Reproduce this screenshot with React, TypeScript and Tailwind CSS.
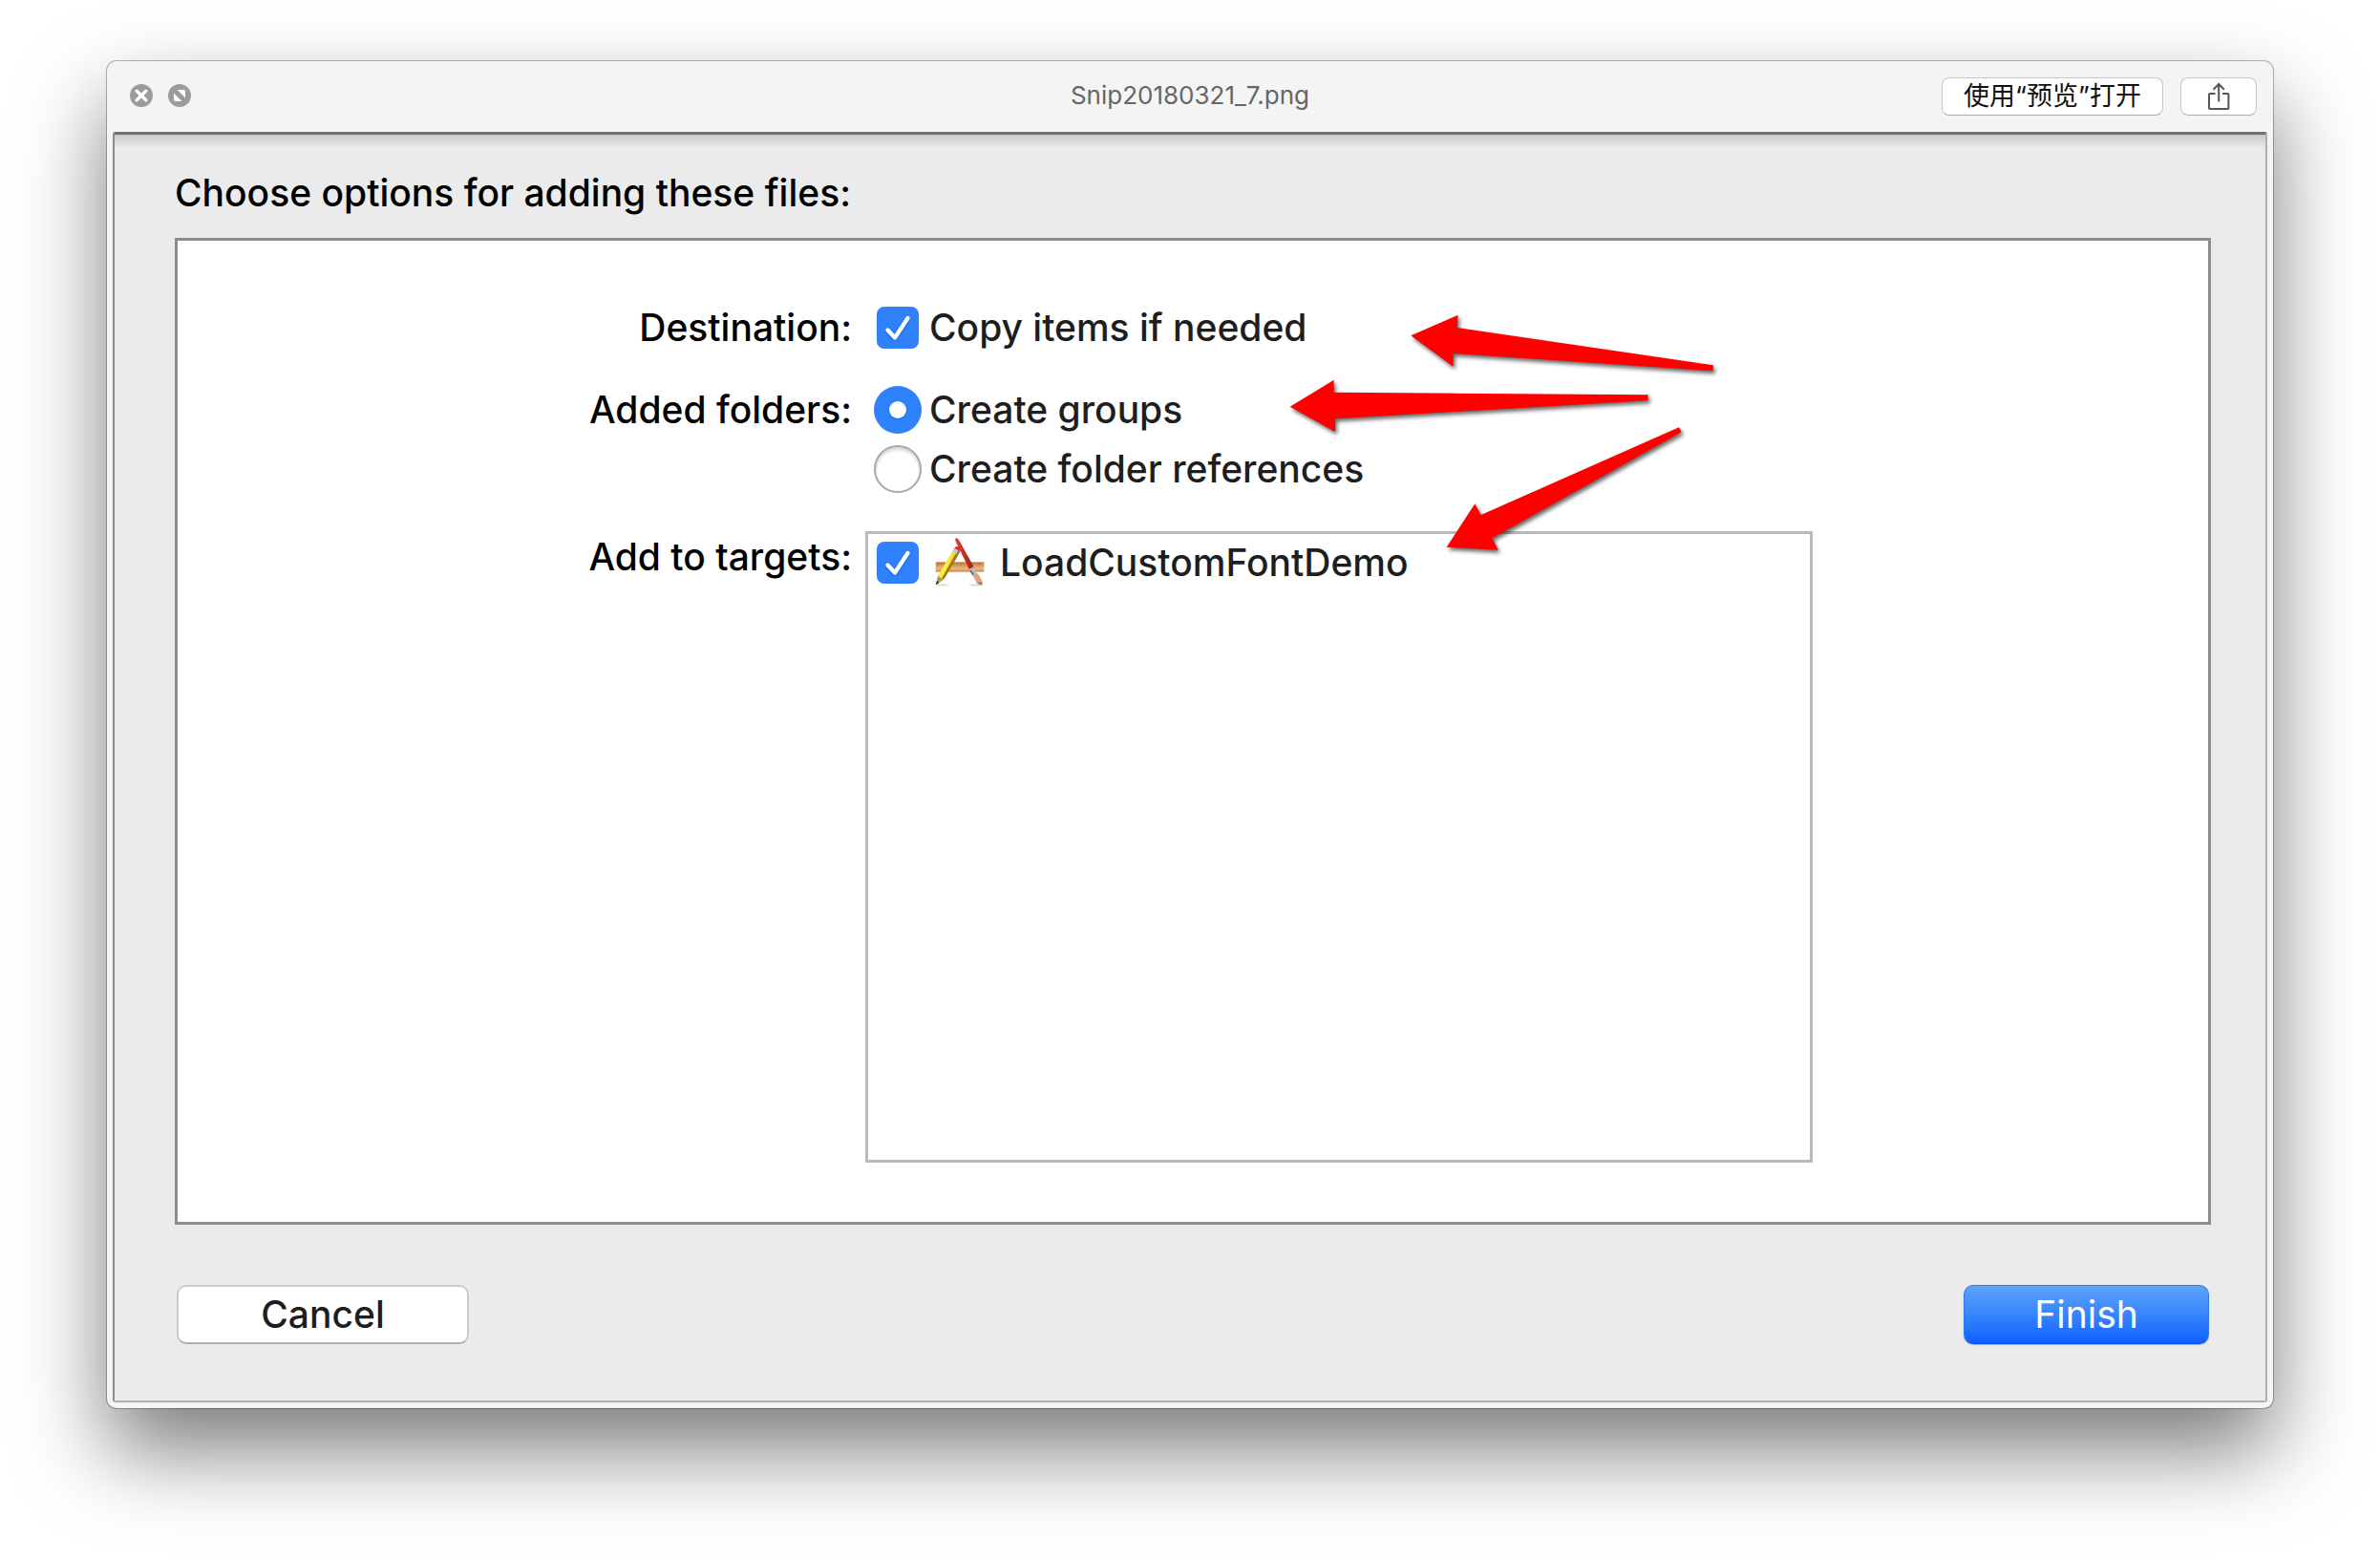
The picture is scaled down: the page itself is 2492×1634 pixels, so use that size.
import { useState } from "react";
import type { ReactNode } from "react";

function CloseGlyph() {
  return (
    <svg viewBox="0 0 24 24" className="size-6" aria-hidden="true">
      <circle cx="12" cy="12" r="12" fill="#9b9b9b" />
      <path d="M7.2 7.2l9.6 9.6M16.8 7.2l-9.6 9.6" stroke="#fff" strokeWidth="3.4" strokeLinecap="round" />
    </svg>
  );
}

function ZoomGlyph() {
  return (
    <svg viewBox="0 0 24 24" className="size-6" aria-hidden="true">
      <circle cx="12" cy="12" r="12" fill="#9b9b9b" />
      <path d="M9.6 6H16.6Q18 6 18 7.4V14.4Z" fill="#fff" />
      <path d="M6 9.6V16.6Q6 18 7.4 18H14.4Z" fill="#fff" />
    </svg>
  );
}

function ShareGlyph() {
  return (
    <svg viewBox="0 0 24 30" className="h-[30px] w-6" fill="none" stroke="#555" strokeWidth="2" aria-hidden="true">
      <path d="M8.5 12H3Q2 12 2 13V27Q2 28 3 28H21.4Q22.4 28 22.4 27V13Q22.4 12 21.4 12H16" />
      <path d="M12.2 20.5V2M6.6 7.8L12.2 2L17.8 7.8" />
    </svg>
  );
}

function AppGlyph() {
  return (
    <svg viewBox="0 0 156 156" className="size-[52px] shrink-0" aria-hidden="true">
      <defs>
        <linearGradient id="wood" x1="0" y1="0" x2="0" y2="1">
          <stop offset="0" stopColor="#cf8a55" />
          <stop offset="0.35" stopColor="#d79a63" />
          <stop offset="0.65" stopColor="#efb780" />
          <stop offset="1" stopColor="#c98a55" />
        </linearGradient>
        <linearGradient id="pencil" x1="0" y1="0" x2="1" y2="0.6">
          <stop offset="0" stopColor="#e8c400" />
          <stop offset="0.5" stopColor="#fff04a" />
          <stop offset="1" stopColor="#b88a00" />
        </linearGradient>
        <linearGradient id="brush" x1="0" y1="0.4" x2="1" y2="0">
          <stop offset="0" stopColor="#e2533b" />
          <stop offset="0.5" stopColor="#b02a1c" />
          <stop offset="1" stopColor="#701409" />
        </linearGradient>
      </defs>
      <ellipse cx="24" cy="148" rx="20" ry="4" fill="#000" opacity="0.12" />
      <ellipse cx="130" cy="148" rx="24" ry="4" fill="#000" opacity="0.14" />
      <rect x="2" y="77" width="152" height="30" fill="url(#wood)" />
      <path d="M2 77.500H154" stroke="#b5713f" strokeWidth="2" />
      <path d="M10 78v8M20 78v5M30 78v8M40 78v5M60 78v8M70 78v5M80 78v8M90 78v5M120 78v8M130 78v5M140 78v8" stroke="#96592e" strokeWidth="2" />
      <path d="M65 1Q72 1 76 8L122 92L108 100L66 14Q62 5 65 1Z" fill="url(#brush)" />
      <path d="M107 99L121 91L131 110L118 118Z" fill="#b9bcc0" />
      <path d="M109 103L113 101L123 114L118 118Z" fill="#606468" />
      <path d="M118 118L131 110Q145 122 149 140Q150 147 143 148Q136 147 129 137Z" fill="#dba58a" />
      <path d="M129 137Q136 147 143 148Q150 147 149 140Q141 142 129 137Z" fill="#a8705a" />
      <path d="M54 42L73 53L28 130L9 119Z" fill="url(#pencil)" />
      <path d="M66 49L73 53L28 130L22 126Z" fill="#9b7808" />
      <path d="M9 119L28 130L5 147Q3 147 3 144Z" fill="#b29a5c" />
      <path d="M6 134L13 140L5 147Q3 147 3 144Z" fill="#3c3a34" />
      <path d="M60 32L79 43L73 53L54 42Z" fill="#c6c9cc" />
      <path d="M73 39L79 43L73 53L67 49Z" fill="#777b80" />
      <path d="M60 32Q66 24 74 28Q82 33 79 43Z" fill="#ee2436" />
    </svg>
  );
}

function Check({ id, defaultChecked }: { id: string; defaultChecked?: boolean }) {
  const [on, setOn] = useState(!!defaultChecked);
  return (
    <span className="grid size-11 shrink-0">
      <input
        id={id}
        type="checkbox"
        checked={on}
        onChange={(e) => setOn(e.target.checked)}
        className="size-11 appearance-none rounded-lg border border-[#b4b4b4] bg-white [grid-area:1/1] checked:border-0 checked:bg-[#2f82fb]"
      />
      {on && (
        <svg viewBox="0 0 44 44" className="pointer-events-none size-11 drop-shadow-[0_1px_1px_#0b4fae99] [grid-area:1/1]" aria-hidden="true">
          <path d="M11.500 24.500L19 32.500L32.500 12" fill="none" stroke="#fff" strokeWidth="4.2" strokeLinecap="round" strokeLinejoin="round" />
        </svg>
      )}
    </span>
  );
}

function Radio({ id, checked, onSelect }: { id: string; checked: boolean; onSelect: () => void }) {
  return (
    <span className="grid size-[50px] shrink-0 place-items-center">
      <input
        id={id}
        type="radio"
        name="folders"
        checked={checked}
        onChange={onSelect}
        className="size-[50px] appearance-none rounded-full border-2 border-[#a9a9a9] bg-white shadow-[inset_0_3px_3px_#00000026] [grid-area:1/1] checked:border-0 checked:bg-[#2f82fb] checked:shadow-none"
      />
      {checked && (
        <span className="pointer-events-none size-[18px] rounded-full bg-white shadow-[0_1px_2px_#0b4fae99] [grid-area:1/1]" />
      )}
    </span>
  );
}

function Option({ id, text, children }: { id: string; text: string; children: ReactNode }) {
  return (
    <div className="flex items-center gap-2 pl-[9px]">
      <span className="flex w-[50px] justify-center">{children}</span>
      <label htmlFor={id}>{text}</label>
    </div>
  );
}

function Arrows() {
  return (
    <svg
      viewBox="0 0 1500 870"
      className="pointer-events-none absolute top-[58px] left-[53.300%] h-[290px] w-[500px] drop-shadow-[2px_3px_2px_#00000099]"
      fill="#fe0000"
      aria-hidden="true"
    >
      <path d="M475 124L623 59L620 99L1425 217L1424 235L608 180V221Z" />
      <path d="M95 347L233 263V302L1220 310V328L237 385V426Z" />
      <path d="M587 788L676 652L695 687L1317 412L1325 427L730 760L749 797Z" />
    </svg>
  );
}

export default function App() {
  const [folders, setFolders] = useState("groups");
  return (
    <div className="flex min-h-screen flex-col bg-white px-28 pt-16 pb-40 font-[Inter,'Noto_Sans_CJK_SC',sans-serif] text-[39px] leading-[50px] font-medium text-[#1e1e1e]">
      <div className="flex flex-1 flex-col rounded-[10px] bg-[#f4f4f4] px-1.5 pb-1.5 shadow-[0_0_0_1px_#00000048,0_44px_90px_#00000085]">
        <header className="grid h-[74px] grid-cols-[1fr_auto_1fr] items-center px-[11px]">
          <div className="flex gap-4 pb-0.5 pl-[7px]">
            <button type="button" aria-label="Close" className="size-6"><CloseGlyph /></button>
            <button type="button" aria-label="Full screen" className="size-6"><ZoomGlyph /></button>
          </div>
          <h1 className="pb-0.5 text-[26px] leading-8 font-normal text-[#666]">Snip20180321_7.png</h1>
          <div className="flex justify-end gap-[18px]">
            <button type="button" className="h-10 w-[232px] rounded-lg border border-[#c6c6c6] border-b-[#ababab] bg-white text-[27px] leading-8 font-normal text-[#111]">
              使用“预览”打开
            </button>
            <button type="button" aria-label="Share" className="flex h-10 w-20 items-center justify-center rounded-lg border border-[#c6c6c6] border-b-[#ababab] bg-white">
              <ShareGlyph />
            </button>
          </div>
        </header>

        <main className="flex flex-1 flex-col rounded-[3px] border-2 border-t-3 border-[#aeaeae] border-t-[#707070] border-l-[#8a8a8a] bg-[#ebebeb] bg-[linear-gradient(#c8c8c8,#ebebeb_14px)] bg-no-repeat pt-9 pr-[57px] pb-[59px] pl-[63px]">
          <h2 className="text-black">Choose options for adding these files:</h2>

          <form className="relative mt-[22px] grid flex-1 grid-cols-[706fr_992fr_400fr] grid-rows-[auto_auto_1fr] gap-x-3.5 border-3 border-[#8c8c8c] bg-white pt-[66px] pb-[62px]">
            <div className="text-right text-black">Destination:</div>
            <div className="col-span-2">
              <Option id="copy" text="Copy items if needed"><Check id="copy" defaultChecked /></Option>
            </div>

            <div className="mt-9 text-right text-black">Added folders:</div>
            <div className="col-span-2 mt-9 flex flex-col gap-3">
              <Option id="groups" text="Create groups">
                <Radio id="groups" checked={folders === "groups"} onSelect={() => setFolders("groups")} />
              </Option>
              <Option id="refs" text="Create folder references">
                <Radio id="refs" checked={folders === "refs"} onSelect={() => setFolders("refs")} />
              </Option>
            </div>

            <div className="mt-[42px] text-right text-black">Add to targets:</div>
            <div className="mt-10 border-3 border-[#b9b9b9] pt-1 pl-[9px]">
              <div className="flex items-center">
                <Check id="target" defaultChecked />
                <label htmlFor="target" className="flex items-center gap-4 pl-[17px]">
                  <AppGlyph />
                  LoadCustomFontDemo
                </label>
              </div>
            </div>
            <Arrows />
          </form>

          <footer className="mt-[63px] flex justify-between px-0.5">
            <button type="button" className="h-[62px] w-[306px] rounded-[10px] border-2 border-[#cacaca] border-b-[#b0b0b0] bg-white">
              Cancel
            </button>
            <button type="button" className="h-[62px] w-[257px] rounded-[10px] border border-[#2f79f5] border-b-[#0a4cf5] bg-linear-to-b from-[#5ea3f9] to-[#0a60ff] font-normal text-white shadow-[0_1px_1px_#00000040]">
              Finish
            </button>
          </footer>
        </main>
      </div>
    </div>
  );
}
